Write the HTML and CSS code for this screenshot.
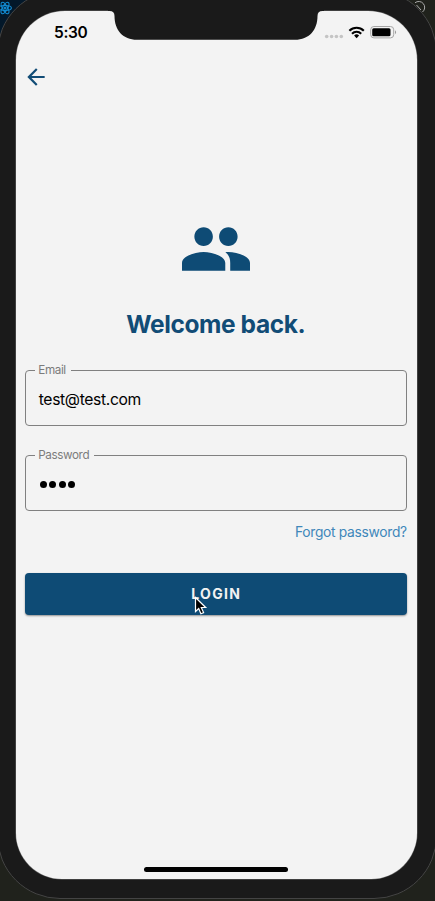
FILE: index.html
```html
<!DOCTYPE html>
<html lang="en">
<head>
<meta charset="utf-8">
<title>Login</title>
<link rel="stylesheet" href="styles.css">
</head>
<body>
<div class="desktop">
  <svg class="react-logo" viewBox="0 0 16 16" fill="none" stroke="#128bd2" stroke-width="1.1">
    <ellipse cx="5" cy="8" rx="6.4" ry="2.5"/>
    <ellipse cx="5" cy="8" rx="6.4" ry="2.5" transform="rotate(60 5 8)"/>
    <ellipse cx="5" cy="8" rx="6.4" ry="2.5" transform="rotate(120 5 8)"/>
    <circle cx="5" cy="8" r="1" fill="#128bd2"/>
  </svg>
  <div class="phone">
    <main class="screen">
      <header class="status">
        <span class="time">5:30</span>
        <svg class="indicators" viewBox="0 0 76 16">
          <g fill="#c4c4c4"><circle cx="4.7" cy="11.5" r="1.8"/><circle cx="9.6" cy="11.5" r="1.8"/><circle cx="14.4" cy="11.5" r="1.8"/><circle cx="19.3" cy="11.5" r="1.8"/></g>
          <g fill="none" stroke="#000" stroke-width="2.1">
            <path d="M27.4 5.7a10.2 10.2 0 0 1 14.4 0"/>
            <path d="M30 8.7a6.5 6.5 0 0 1 9.2 0"/>
          </g>
          <path d="M32.1 10.6a3.5 3.5 0 0 1 5 0L34.6 13.2z"/>
          <rect x="48.7" y="1.5" width="23" height="11.4" rx="3.2" fill="none" stroke="#a5a5a5"/>
          <rect x="50.2" y="3.2" width="18.3" height="8.1" rx="1.5"/>
          <path d="M73 5.2q2.2 2 0 4z" fill="#999"/>
        </svg>
      </header>
      <nav class="nav">
        <svg class="back" viewBox="0 0 24 24"><path fill="#114c76" d="M20 11H7.83l5.59-5.59L12 4l-8 8 8 8 1.41-1.41L7.83 13H20v-2z"/></svg>
      </nav>
      <section class="login">
        <svg class="people" viewBox="1 5 22 14"><path fill="#0e4b75" d="M16 11c1.66 0 2.99-1.34 2.99-3S17.66 5 16 5s-3 1.34-3 3 1.34 3 3 3zm-8 0c1.66 0 2.99-1.34 2.99-3S9.66 5 8 5 5 6.34 5 8s1.34 3 3 3zm0 2c-2.33 0-7 1.17-7 3.5V19h14v-2.500c0-2.330-4.670-3.500-7-3.500zm8 0c-.29 0-.62.02-.97.05 1.16.84 1.570 1.970 1.570 3.450V19H23v-2.500c0-2.330-4.670-3.500-7-3.500z"/></svg>
        <h1 class="title">Welcome back.</h1>
        <fieldset class="field">
          <legend class="label">Email</legend>
          <span class="value">test@test.com</span>
        </fieldset>
        <fieldset class="field field-password">
          <legend class="label">Password</legend>
          <span class="dots"><i></i><i></i><i></i><i></i></span>
        </fieldset>
        <a class="forgot">Forgot password?</a>
        <button class="submit"><span>LOGIN</span>
          <svg class="cursor" viewBox="0 0 14 20"><path d="M1.500 1.500v14l3.200-3 2.200 5.200 2.700-1.100-2.300-5.100h4.400z" fill="#000" stroke="#fff" stroke-width="1.200"/></svg>
        </button>
      </section>
      <div class="home-bar"></div>
    </main>
    <svg class="notch" viewBox="0 0 216 32"><path fill="#1a1a1a" d="M0 0H216V3H214.500Q209.500 3 209.500 8C209.500 22 201 31.800 187 31.800H29C15 31.800 6.500 22 6.500 8Q6.500 3 1.500 3H0z"/></svg>
  </div>
  <svg class="corner-mark" viewBox="0 0 16 16" fill="none" stroke="#aaa" stroke-width="1">
    <path d="M5 2.800A5.800 5.800 0 0 1 12.500 12M6.500 5l4.500 5"/>
  </svg>
</div>
</body>
</html>
```
FILE: styles.css
```css
* { box-sizing: border-box; }
body { margin: 0; font-family: Inter, "Liberation Sans", sans-serif; }
.desktop {
  position: relative; width: 435px; height: 901px; overflow: hidden;
  background: linear-gradient(90deg, #03182a 0 50%, #20221c 50%) top / 100% 60px no-repeat, #20221c;
}
.react-logo { position: absolute; left: 0; top: 0; width: 16px; height: 16px; }
.corner-mark { position: absolute; left: 410px; top: 0; width: 16px; height: 16px; }
.phone {
  position: relative; width: 440px; height: 909px; margin: -10px 0 0 -3px;
  padding: 19.500px 0 0 17.500px; background: #1a1a1a;
  border: 1px solid #444; border-radius: 63px;
}
.screen {
  display: flex; flex-direction: column; width: 401.500px; height: 868.500px;
  border-radius: 49px 49px 46px 46px; background: #f3f3f3; padding: 0 9.500px;
  box-shadow: 0 0 0 .5px #666;
}
.status { display: flex; justify-content: space-between; height: 46px; padding: 14px 10px 0 29px; }
.time { font-size: 15.500px; font-weight: 600; line-height: 16px; letter-spacing: -.35px; }
.indicators { width: 76px; height: 16px; }
.nav { display: flex; height: 43px; padding: 7px 0 0; margin-left: -2px; }
.back { width: 26px; height: 26px; }
.login { display: flex; flex-direction: column; align-items: center; }
.people { width: 68px; height: 44px; margin-top: 127px; }
.title { margin: 38.500px 0 0; height: 30px; line-height: 30px; font-size: 24.500px; font-weight: 700; color: #114c76; white-space: nowrap; letter-spacing: -.4px; transform: translateX(-.5px); }
.field { display: flex; width: 382px; height: 63px; margin: 24px 0 0; padding: 0 12.500px; border: 1px solid #808080; border-radius: 4px; }
.field-password { margin-top: 22.300px; }
.label { height: 14px; margin-left: -4px; padding: 0 5px 0 3.500px; font-size: 11.700px; line-height: 14px; letter-spacing: -.4px; color: #7b7b7b; }
.value { margin-top: 10px; font-size: 15.700px; line-height: 25px; letter-spacing: -.36px; }
.dots { display: flex; gap: 2.500px; margin: 18.400px 0 0 1px; }
.dots i { width: 7px; height: 7px; border-radius: 50%; background: #000; }
.forgot { align-self: flex-end; margin: 11.500px .7px 0 0; font-size: 13.800px; line-height: 18px; letter-spacing: -.3px; color: #4087ba; }
.submit {
  position: relative; width: 382px; height: 42px; margin: 32.400px 0 0; padding: 0;
  border: 0; border-radius: 4px; background: #0e4b75; color: #f2f2f2;
  font: 700 14px/42px Inter, sans-serif; letter-spacing: 1.300px;
  box-shadow: 0 1px 2px rgba(0,0,0,.4);
}
.cursor { position: absolute; left: 169px; top: 23px; width: 14px; height: 20px; }
.home-bar { width: 144px; height: 5px; margin: auto auto 7.500px; border-radius: 3px; background: #000; }
.notch { position: absolute; left: 110px; top: 17px; width: 216px; height: 32px; }
```
